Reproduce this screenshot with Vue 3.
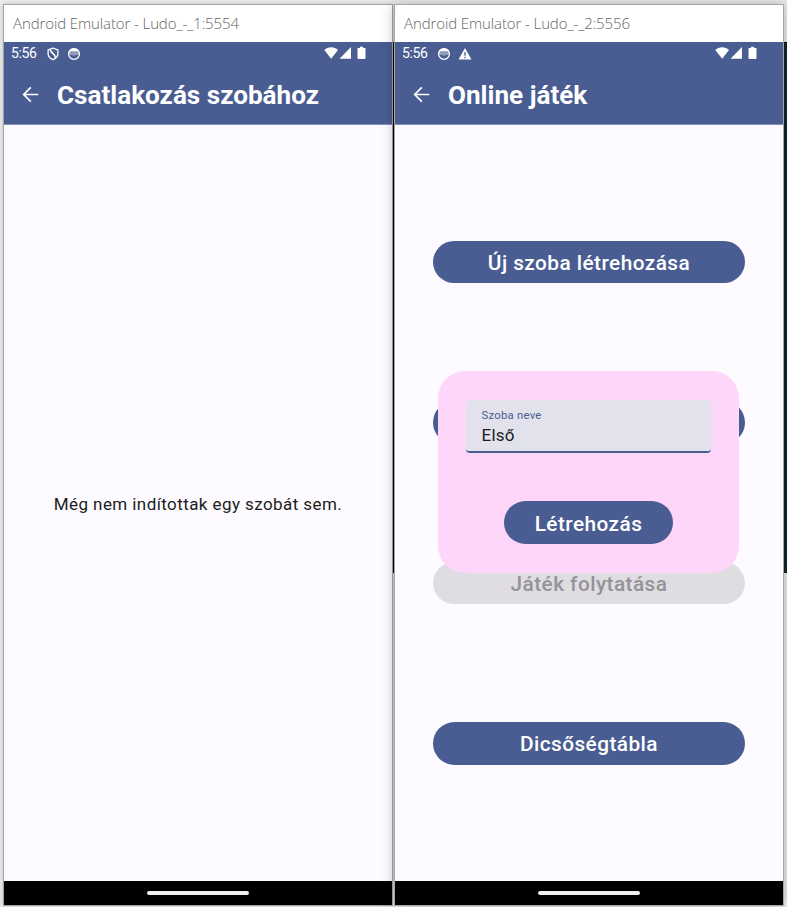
<script setup>
const windows = [
  { id: 1, caption: 'Android Emulator - Ludo_-_1:5554', title: 'Csatlakozás szobához', notes: ['shield', 'face'] },
  { id: 2, caption: 'Android Emulator - Ludo_-_2:5556', title: 'Online játék', notes: ['face', 'warn'] },
]
</script>

<template>
  <div class="desktop">
    <div class="backdrop"></div>
    <section v-for="w in windows" :key="w.id" class="window" :class="'window-' + w.id">
      <div class="caption"><span>{{ w.caption }}</span></div>
      <header class="top">
        <div class="status">
          <span class="clock">5:56</span>
          <template v-for="n in w.notes" :key="n">
            <svg v-if="n === 'shield'" class="note" viewBox="0 0 14 14">
              <path d="M7 1.2 2.1 3v3.6c0 2.8 1.9 4.9 4.9 6.1 3-1.2 4.9-3.3 4.9-6.1V3z" fill="none" stroke="#fff" stroke-width="1.3" />
              <path d="M4.2 2.4C4.6 6 9.2 6.5 9.6 11" fill="none" stroke="#fff" stroke-width="1.5" />
            </svg>
            <svg v-else-if="n === 'face'" class="note" viewBox="0 0 14 14">
              <circle cx="7" cy="7" r="5.4" fill="none" stroke="#fff" stroke-width="1.3" />
              <path d="M1.7 4.8C2.5 2.4 4.5 1.2 7 1.2s4.5 1.2 5.3 3.6L10.6 4.4H3.4z" fill="#fff" />
              <path d="M2 5h10v1.8q-1 1.7-2.5 1.2l-2.5.8-2.5-.8Q3 8.5 2 6.8z" fill="#fff" fill-opacity=".4" />
            </svg>
            <svg v-else class="note" viewBox="0 0 14 14">
              <path d="M7 1 13.5 12.6H.5z" fill="#fff" />
              <path d="M7 5v3.8M7 9.8v1.4" stroke="#495d92" stroke-width="1.3" />
            </svg>
          </template>
          <svg class="signals" viewBox="0 0 44 14">
            <path d="M.3 4.1C4.2.3 10.1.3 14 4.1L7.2 12.7z" fill="#fff" />
            <path d="M27 1v11.8H15.5z" fill="#fff" />
            <path d="M35.9.7h3.2v1.2h1.6q.8 0 .8.8V12q0 .9-.9.9h-6.2q-.9 0-.9-.9V2.7q0-.8.8-.8h1.6z" fill="#fff" />
          </svg>
        </div>
        <div class="bar">
          <svg class="back" viewBox="0 0 16 16">
            <path d="M15.3 8H2M8.3 1.3 1.6 8l6.7 6.7" fill="none" stroke="#fff" stroke-width="1.6" />
          </svg>
          <h1>{{ w.title }}</h1>
        </div>
      </header>
      <main v-if="w.id === 1" class="content empty">
        <p>Még nem indítottak egy szobát sem.</p>
      </main>
      <main v-else class="content menu">
        <button class="pill">Új szoba létrehozása</button>
        <button class="pill"></button>
        <button class="pill disabled">Játék folytatása</button>
        <button class="pill">Dicsőségtábla</button>
        <div class="dialog">
          <label class="field">
            <span class="label">Szoba neve</span>
            <span class="value">Első</span>
          </label>
          <button class="pill small">Létrehozás</button>
        </div>
      </main>
      <footer class="nav"><i></i></footer>
    </section>
  </div>
</template>

<style>
body { margin: 0; overflow: hidden; }
</style>

<style scoped>
* { box-sizing: border-box; }
.desktop {
  position: relative;
  display: flex;
  gap: 1px;
  width: 787px;
  height: 907px;
  padding: 4px 3px 1px;
  overflow: hidden;
  background: #ececec;
  font-family: Roboto, sans-serif;
}
.backdrop {
  position: absolute;
  top: 42px;
  left: 393px;
  width: 394px;
  height: 531px;
  background: #14232b;
  border: 1px solid #000;
  border-width: 1px 0 0 1px;
}
.window {
  position: relative;
  display: flex;
  flex-direction: column;
  flex: none;
  width: 390px;
  height: 902px;
  border: 1px solid #a5a5a5;
  background: #fdfbff;
}
.window-1 { box-shadow: 0 0 5px #0003; }
.window-2 { box-shadow: 0 0 12px #0004; }
.caption {
  display: flex;
  align-items: center;
  height: 37px;
  flex: none;
  padding: 0 0 2px 9px;
  background: #fff;
  color: #666;
  font: 300 15px "Open Sans", sans-serif;
  letter-spacing: -.11px;
  white-space: nowrap;
}
.top { height: 83px; flex: none; background: #495d92; border-bottom: 1px solid #8592b5; color: #fff; }
.status { display: flex; align-items: center; height: 23px; padding-left: 7px; }
.clock { width: 35px; font-size: 14px; line-height: 23px; letter-spacing: -.35px; }
.note { width: 14px; height: 14px; margin-right: 6.5px; }
.signals { width: 44px; height: 14px; margin: 0 24px 1px auto; }
.bar { display: flex; align-items: center; height: 60px; padding-left: 18px; }
.back { width: 17px; height: 17px; margin: 0 18px 1px 0; }
h1 { margin: 0; font-size: 26.1px; font-weight: 700; line-height: 34px; white-space: nowrap; }
.content { position: relative; flex: 1; }
.empty { display: flex; align-items: center; justify-content: center; padding-top: 2px; }
.empty p { margin: 0; font-size: 17px; letter-spacing: .42px; color: #1a1b20; white-space: nowrap; }
.menu { display: flex; flex-direction: column; align-items: center; gap: 118px; padding-top: 115.6px; }
.pill {
  width: 312px;
  height: 42.5px;
  flex: none;
  padding: 2px 0 0;
  border: 0;
  border-radius: 22px;
  background: #495d92;
  color: #fff;
  font: 500 20.8px Roboto, sans-serif;
  letter-spacing: .45px;
}
.disabled { background: #dfdde2; color: #949398; }
.dialog {
  position: absolute;
  top: 246.4px;
  left: 42.6px;
  display: flex;
  flex-direction: column;
  align-items: center;
  justify-content: space-between;
  width: 301.8px;
  height: 202px;
  padding: 28.7px 0 29.5px;
  border-radius: 27px;
  background: #fdd6fa;
}
.field {
  display: flex;
  flex-direction: column;
  width: 245px;
  height: 53px;
  padding: 8px 15px 0 15.6px;
  border-bottom: 2px solid #495d92;
  border-radius: 4px;
  background: #e2e2ec;
}
.label { font-size: 11.3px; line-height: 15px; letter-spacing: .25px; color: #495d92; }
.value { font-size: 17px; line-height: 24px; letter-spacing: .2px; color: #1a1b20; }
.small { width: 169px; }
.nav { display: flex; justify-content: center; align-items: center; height: 24px; flex: none; padding: 0 1px 1px 0; background: #000; }
.nav i { width: 102px; height: 4px; border-radius: 2px; background: #f0f0f0; }
</style>
